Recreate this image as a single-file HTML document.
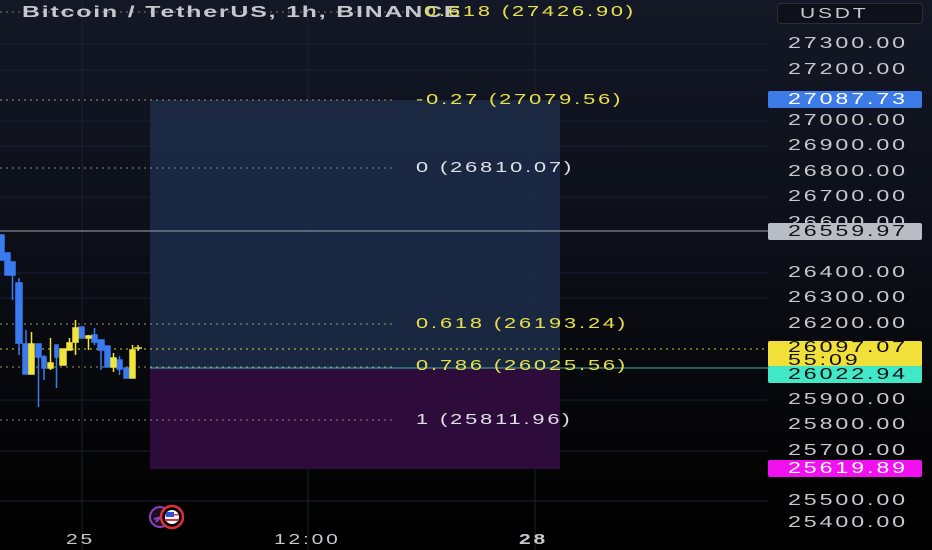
<!DOCTYPE html>
<html><head><meta charset="utf-8"><style>
body{margin:0;width:932px;height:550px;overflow:hidden;background:#000;font-family:"Liberation Sans",sans-serif}
.wrap{position:relative;width:932px;height:550px;background:linear-gradient(#141826 0%,#0c0f18 45%,#050507 80%,#000 100%)}
.ax{position:absolute;left:788px;color:#c8c8cc;font-size:16px;letter-spacing:2px;line-height:16px;transform:scaleX(1.45);transform-origin:left;white-space:nowrap}
.lbl{position:absolute;left:768px;width:154px;height:17px;border-radius:2px;overflow:hidden}
.lbl span{position:absolute;left:20px;top:0;font-size:16px;letter-spacing:2px;line-height:17px;transform:scaleX(1.45);transform-origin:left;white-space:nowrap}
.fib{position:absolute;left:416px;font-size:15px;letter-spacing:2px;line-height:16px;transform:scaleX(1.45);transform-origin:left;white-space:nowrap}
.tm{position:absolute;top:531px;color:#c8c8cc;font-size:15px;letter-spacing:2px;transform:scaleX(1.4);transform-origin:left}
</style></head><body><div class="wrap">
<svg width="932" height="550" style="position:absolute;left:0;top:0">
<g stroke="#1c2030" stroke-width="1">
<line x1="82" y1="0" x2="82" y2="550"/><line x1="308" y1="0" x2="308" y2="550"/><line x1="535" y1="0" x2="535" y2="550"/>
<line x1="0" y1="44" x2="768" y2="44"/><line x1="0" y1="70" x2="768" y2="70"/><line x1="0" y1="121" x2="768" y2="121"/><line x1="0" y1="146" x2="768" y2="146"/><line x1="0" y1="197" x2="768" y2="197"/><line x1="0" y1="273" x2="768" y2="273"/><line x1="0" y1="298" x2="768" y2="298"/><line x1="0" y1="400" x2="768" y2="400"/><line x1="0" y1="451" x2="768" y2="451"/><line x1="0" y1="501" x2="768" y2="501"/>
</g>
<rect x="150" y="100" width="410" height="268" fill="#1b2945" opacity="0.95"/>
<rect x="150" y="368" width="410" height="101" fill="#2d0b3a"/>
<g stroke-dasharray="2,4" stroke-width="1">
<line x1="0" y1="100" x2="392" y2="100" stroke="#9a9a6a"/>
<line x1="0" y1="168" x2="392" y2="168" stroke="#888"/>
<line x1="0" y1="324" x2="392" y2="324" stroke="#9a9a6a"/>
<line x1="0" y1="367" x2="392" y2="367" stroke="#9a9a6a"/>
<line x1="0" y1="420" x2="392" y2="420" stroke="#888"/>
<line x1="0" y1="349" x2="768" y2="349" stroke="#d6d040"/>
<line x1="0" y1="12" x2="420" y2="12" stroke="#777"/>
</g>
<line x1="150" y1="368" x2="768" y2="368" stroke="#40b0a8" stroke-width="1"/>
<line x1="0" y1="231" x2="768" y2="231" stroke="#a0a4b0" stroke-width="1"/>
<g fill="#3b7bf0" stroke="#3b7bf0" stroke-width="1.5">
<rect x="0" y="235" width="4" height="25"/><rect x="5" y="253" width="5" height="22"/>
<line x1="12.5" y1="265" x2="12.5" y2="300"/><rect x="11" y="262" width="4" height="13"/>
<line x1="19" y1="278" x2="19" y2="355"/><rect x="16" y="283" width="6" height="60"/>
<line x1="26" y1="330" x2="26" y2="374"/><rect x="23" y="344" width="5" height="30"/>
<line x1="38.5" y1="344" x2="38.5" y2="407"/><rect x="36" y="344" width="5" height="13"/>
<line x1="44" y1="355" x2="44" y2="380"/><rect x="42" y="357" width="4" height="11"/>
<line x1="56.5" y1="345" x2="56.5" y2="388"/><rect x="55" y="345" width="3" height="12"/>
<rect x="79" y="327" width="5" height="11"/>
<line x1="94.5" y1="328" x2="94.5" y2="345"/><rect x="92" y="335" width="5" height="7"/>
<line x1="101" y1="345" x2="101" y2="370"/><rect x="98" y="340" width="6" height="10"/>
<rect x="105" y="346" width="5" height="21"/>
<line x1="119.5" y1="356" x2="119.5" y2="375"/><rect x="117" y="360" width="5" height="9"/>
<rect x="124" y="368" width="5" height="10"/>
</g>
<g fill="#f2e53a" stroke="#f2e53a" stroke-width="1.5">
<line x1="31.5" y1="332" x2="31.5" y2="374"/><rect x="29" y="344" width="5" height="30"/>
<line x1="50.5" y1="338" x2="50.5" y2="370"/><rect x="48" y="363" width="5" height="5"/>
<rect x="60" y="349" width="6" height="16"/>
<line x1="69.5" y1="338" x2="69.5" y2="350"/><rect x="67" y="343" width="5" height="7"/>
<line x1="75.5" y1="320" x2="75.5" y2="355"/><rect x="73" y="328" width="5" height="14"/>
<line x1="88.5" y1="335" x2="88.5" y2="350"/><rect x="86" y="336" width="5" height="2"/>
<line x1="113.5" y1="353" x2="113.5" y2="372"/><rect x="111" y="358" width="5" height="9"/>
<line x1="132.5" y1="345" x2="132.5" y2="378"/><rect x="130" y="350" width="5" height="28"/>
<line x1="138" y1="345" x2="138" y2="351"/><line x1="134" y1="348" x2="142" y2="348"/>
</g>
<circle cx="160" cy="517" r="10" fill="#1a1020" stroke="#9040c0" stroke-width="2"/>
<path d="M156 522 L164 513 M154 519 L162 517" stroke="#9040c0" stroke-width="2"/>
<circle cx="172" cy="517" r="11" fill="#000" stroke="#e03040" stroke-width="2.5"/>
<circle cx="172" cy="517" r="7" fill="#fff"/>
<rect x="165" y="519" width="14" height="2" fill="#e03040"/><rect x="165" y="514" width="14" height="1.5" fill="#e03040"/>
<rect x="166" y="512" width="8" height="5" fill="#3050d0"/>
</svg>
<div style="position:absolute;left:22px;top:4px;color:#c8c8cc;font-size:16px;letter-spacing:1.2px;font-weight:bold;transform:scaleX(1.55);transform-origin:left;white-space:nowrap">Bitcoin / TetherUS, 1h, BINANCE</div>
<div class="fib" style="top:4px;left:424px;color:#e8e04a">0.618 (27426.90)</div>
<div style="position:absolute;left:777px;top:3px;width:144px;height:19px;border:1px solid #2a2e3a;border-radius:4px;background:#0e111a"></div>
<div style="position:absolute;left:800px;top:5px;color:#c8c8cc;font-size:15px;letter-spacing:2px;transform:scaleX(1.4);transform-origin:left">USDT</div>
<div class="fib" style="top:92px;color:#e8e04a">-0.27 (27079.56)</div>
<div class="fib" style="top:160px;color:#e0e0e6">0 (26810.07)</div>
<div class="fib" style="top:316px;color:#e8e04a">0.618 (26193.24)</div>
<div class="fib" style="top:358px;color:#e8e04a">0.786 (26025.56)</div>
<div class="fib" style="top:412px;color:#e0e0e6">1 (25811.96)</div>
<div class="ax" style="top:36px">27300.00</div>
<div class="ax" style="top:62px">27200.00</div>
<div class="ax" style="top:113px">27000.00</div>
<div class="ax" style="top:138px">26900.00</div>
<div class="ax" style="top:164px">26800.00</div>
<div class="ax" style="top:189px">26700.00</div>
<div class="ax" style="top:215px">26600.00</div>
<div class="ax" style="top:265px">26400.00</div>
<div class="ax" style="top:290px">26300.00</div>
<div class="ax" style="top:316px">26200.00</div>
<div class="ax" style="top:392px">25900.00</div>
<div class="ax" style="top:417px">25800.00</div>
<div class="ax" style="top:443px">25700.00</div>
<div class="ax" style="top:493px">25500.00</div>
<div class="ax" style="top:515px">25400.00</div>
<div class="lbl" style="top:91px;background:#3d7be8;color:#fff"><span>27087.73</span></div>
<div class="lbl" style="top:223px;background:#b8bcc4;color:#111"><span>26559.97</span></div>
<div class="lbl" style="top:341px;height:26px;background:#f2e03a;color:#111"><span style="line-height:13px;top:0">26097.07<br>55:09</span></div>
<div class="lbl" style="top:366px;background:#40e8c8;color:#111"><span>26022.94</span></div>
<div class="lbl" style="top:460px;background:#f010f0;color:#fff"><span>25619.89</span></div>
<div class="tm" style="left:66px">25</div>
<div class="tm" style="left:274px">12:00</div>
<div class="tm" style="left:519px;font-weight:bold">28</div>
</div></body></html>
